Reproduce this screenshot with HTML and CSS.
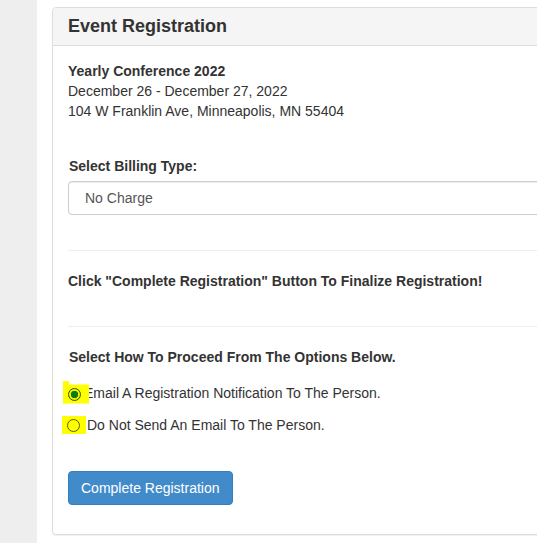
FILE: index.html
```html
<!DOCTYPE html>
<html>
<head>
<meta charset="utf-8">
<link rel="stylesheet" href="styles.css">
</head>
<body>
<div class="page">
  <aside class="side"></aside>
  <main class="main">
    <section class="panel">
      <div class="panel-heading"><h3 class="panel-title">Event Registration</h3></div>
      <div class="panel-body">
        <div class="event">
          <div class="event-name">Yearly Conference 2022</div>
          <div>December 26 - December 27, 2022</div>
          <div>104 W Franklin Ave, Minneapolis, MN 55404</div>
        </div>
        <div class="form-group">
          <label class="label">Select Billing Type:</label>
          <div class="select"><span>No Charge</span></div>
        </div>
        <hr class="rule">
        <p class="notice">Click "Complete Registration" Button To Finalize Registration!</p>
        <hr class="rule">
        <div class="label proceed">Select How To Proceed From The Options Below.</div>
        <div class="radio first">
          <span class="hl hl-a"><span class="dot checked"></span></span>
          <span class="radio-text">Email A Registration Notification To The Person.</span>
        </div>
        <div class="radio second">
          <span class="hl hl-b"><span class="dot"></span></span>
          <span class="radio-text">Do Not Send An Email To The Person.</span>
        </div>
        <button class="btn">Complete Registration</button>
      </div>
    </section>
  </main>
</div>
</body>
</html>
```
FILE: styles.css
```css
html, body {
  margin: 0;
  padding: 0;
  overflow: hidden;
  background: #fff;
}
body {
  font-family: "Liberation Sans", Arial, sans-serif;
  font-size: 14px;
  line-height: 20px;
  color: #333;
}
.page {
  display: flex;
  min-height: 543px;
}
.side {
  width: 37px;
  flex: 0 0 37px;
  background: #eeeeee;
}
.main {
  flex: 1;
  min-width: 0;
  overflow: hidden;
  padding: 7px 0 0 15px;
}
.panel {
  width: 580px;
  border: 1px solid #dddddd;
  border-radius: 4px;
  box-shadow: 0 1px 1px rgba(0,0,0,0.06);
  background: #fff;
  margin-bottom: 2px;
}
.panel-heading {
  background: #f5f5f5;
  border-bottom: 1px solid #dddddd;
  border-radius: 3px 3px 0 0;
  padding: 10px 15px;
}
.panel-title {
  margin: 0;
  font-size: 18px;
  line-height: 17px;
  font-weight: bold;
  color: #333;
}
.panel-body {
  padding: 15px 15px 15px 15px;
}
.event-name {
  font-weight: bold;
}
.form-group {
  margin-top: 35px;
}
.label {
  display: block;
  font-weight: bold;
  margin: 0 0 5px 1px;
}
.select {
  height: 34px;
  box-sizing: border-box;
  border: 1px solid #cccccc;
  border-radius: 4px;
  padding: 6px 16px;
  color: #555;
  box-shadow: inset 0 1px 1px rgba(0,0,0,0.075);
}
.rule {
  border: 0;
  border-top: 1px solid #eeeeee;
  margin: 35px 0 20px 0;
  height: 0;
}
.notice {
  margin: 0;
  font-weight: bold;
}
.proceed {
  margin: 0 0 0 1px;
}
.radio {
  display: flex;
  align-items: center;
  height: 20px;
}
.radio.first {
  margin-top: 16px;
}
.radio.second {
  margin-top: 12px;
}
.hl {
  display: flex;
  align-items: center;
  background: #ffff00;
  box-sizing: border-box;
}
.hl-a {
  width: 26px;
  height: 23px;
  margin: -2px 0 0 -5px;
  padding: 5px 0 0 5px;
  clip-path: polygon(0 0, 6px 0, 6px 4px, 100% 4px, 100% 100%, 0 100%);
}
.hl-b {
  width: 24px;
  height: 18px;
  margin: 0 0 0 -6px;
  padding: 0 0 0 5px;
}
.dot {
  width: 13px;
  height: 13px;
  box-sizing: border-box;
  border-radius: 50%;
  border: 1px solid #5b5b00;
  background: transparent;
}
.dot.checked {
  border: 1px solid #1c5c08;
  background: radial-gradient(circle, #0d7a14 0 3.4px, #f0f000 4px);
}
.radio-text {
  margin-left: -5px;
}
.radio.second .radio-text {
  margin-left: 1px;
}
.btn {
  display: block;
  margin: 36px 0 14px 0;
  height: 34px;
  padding: 6px 12px;
  font-family: "Liberation Sans", Arial, sans-serif;
  font-size: 14px;
  line-height: 20px;
  color: #fff;
  background: #428bca;
  border: 1px solid #357ebd;
  border-radius: 4px;
}
```
